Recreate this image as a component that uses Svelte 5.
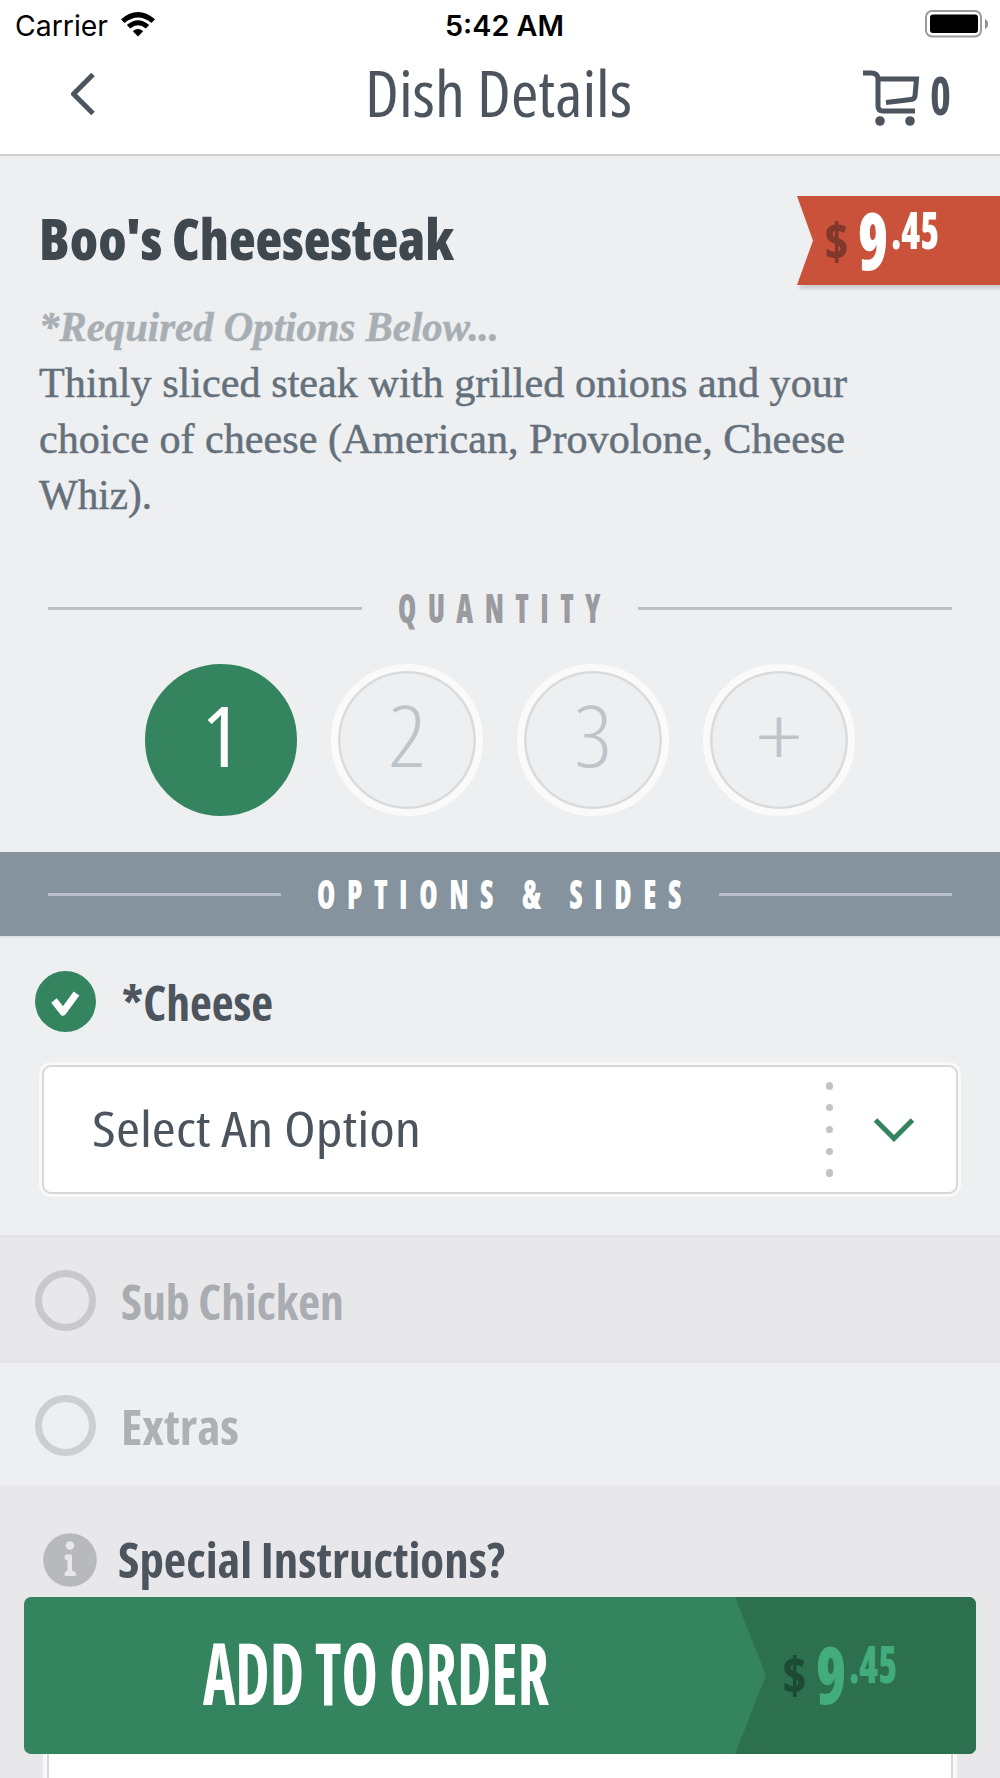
<script>
  const dish = {
    name: "Boo's Cheesesteak",
    dollars: '9',
    cents: '.45'
  };

  const quantities = [
    { text: '1', width: 38 },
    { text: '2', width: 38 },
    { text: '3', width: 38 },
    { text: '+', width: 46 }
  ];

  let quantity = $state('1');
  let cartCount = $state(0);
</script>

<!-- One line of text squeezed to an exact width. The box is as tall as the capitals. -->
{#snippet fit(text, width, size, kind = 'regular', cap = 0.714)}
  <svg class="fit {kind}" {width} height={Math.round(size * cap)}>
    <text x="0" y={Math.round(size * cap)} font-size={size} textLength={width} lengthAdjust="spacingAndGlyphs">{text}</text>
  </svg>
{/snippet}

{#snippet price()}
  <span class="currency">{@render fit('$', 25, 51, 'heavy')}</span>
  <svg class="fit heavy amount" width="81" height="57">
    <text y="57" font-size="80"><tspan textLength="30" lengthAdjust="spacingAndGlyphs">{dish.dollars}</tspan><tspan font-size="51" dx="3" dy="-21" textLength="48" lengthAdjust="spacingAndGlyphs">{dish.cents}</tspan></text>
  </svg>
{/snippet}

<div class="screen">
  <div class="status">
    <div class="carrier">
      {@render fit('Carrier', 93, 28, 'system', 0.727)}
      <svg class="wifi" width="34" height="25" viewBox="0 0 34 25">
        <path d="M0 7.3Q17-7.3 34 7.3L30.5 11Q17 0 3.500 11Z" />
        <path d="M5.800 13Q17 3.500 28.200 13L24.800 16.500Q17 10 9.200 16.500Z" />
        <path d="M11.800 19.200Q17 15 22.200 19.200L17 24.500Z" />
      </svg>
    </div>
    <div class="time">{@render fit('5:42 AM', 119, 28, 'system semi', 0.727)}</div>
    <svg class="battery" width="63" height="28" viewBox="0 0 63 28">
      <rect x="1" y="1" width="55" height="25.500" rx="6" fill="none" stroke="#9b9b9b" stroke-width="2" />
      <rect x="5" y="4.500" width="48" height="18.500" rx="3" />
      <path d="M60 9Q63 10.500 63 14T60 19Z" fill="#8e8e8e" />
    </svg>
  </div>

  <header class="nav">
    <button class="back" aria-label="Back">
      <svg width="24" height="42" viewBox="0 0 24 42">
        <path d="M22 1.500L2.500 21L22 40.500" />
      </svg>
    </button>
    <h1>{@render fit('Dish Details', 267, 63)}</h1>
    <div class="cart">
      <svg width="58" height="58" viewBox="0 0 58 58">
        <path class="line" d="M0 3H8Q15 3 15 9V36Q15 41 20 41H52" />
        <path class="line" d="M15 9H53.500L52 26Q51.500 29 48 29.600L23 32.500" />
        <circle cx="17" cy="51" r="4.800" />
        <circle cx="47" cy="51" r="4.800" />
      </svg>
      {@render fit(String(cartCount), 21, 54, 'bold')}
    </div>
  </header>

  <section class="dish">
    <h2>{@render fit(dish.name, 415, 56, 'heavy')}</h2>
    <div class="tag-shadow">
      <div class="tag">{@render price()}</div>
    </div>
    <div class="description">
      <span class="required">{@render fit('*Required Options Below...', 460, 42, 'serif strong', 0.66)}</span>
      {@render fit('Thinly sliced steak with grilled onions and your', 808, 42, 'serif', 0.66)}
      {@render fit('choice of cheese (American, Provolone, Cheese', 806, 42, 'serif', 0.66)}
      {@render fit('Whiz).', 113, 42, 'serif', 0.66)}
    </div>
  </section>

  <div class="divider quantity-title">
    <i></i>
    {@render fit('QUANTITY', 214, 41, 'heavy spaced')}
    <i></i>
  </div>

  <div class="quantities">
    {#each quantities as item}
      <button class="circle" class:selected={quantity === item.text} onclick={() => (quantity = item.text)}>
        {@render fit(item.text, item.width, 84, quantity === item.text ? 'regular' : 'light')}
      </button>
    {/each}
  </div>

  <div class="divider options-title">
    <i></i>
    {@render fit('OPTIONS & SIDES', 376, 41, 'heavy spaced')}
    <i></i>
  </div>

  <section class="cheese">
    <div class="option">
      <svg class="mark" width="61" height="61" viewBox="0 0 61 61">
        <circle cx="30.500" cy="30.500" r="30.500" fill="#34845f" />
        <path d="M19 29.500L28 41L41.500 22.500" fill="none" stroke="#fff" stroke-width="7" stroke-linejoin="round" />
      </svg>
      {@render fit('*Cheese', 151, 48, 'bold')}
    </div>
    <div class="select">
      {@render fit('Select An Option', 329, 49)}
      <div class="dots">
        {#each Array(5) as _}
          <b></b>
        {/each}
      </div>
      <svg class="chevron" width="40" height="24" viewBox="0 0 40 24">
        <path d="M1.500 2L20 20.500L38.500 2" />
      </svg>
    </div>
  </section>

  <div class="option off shaded">
    <span class="ring"></span>
    {@render fit('Sub Chicken', 223, 48, 'bold')}
  </div>
  <div class="option off">
    <span class="ring"></span>
    {@render fit('Extras', 118, 48, 'bold')}
  </div>

  <section class="special">
    <div class="special-title">
      <svg width="54" height="54" viewBox="0 0 54 54">
        <circle cx="27" cy="27" r="26.800" fill="#b8b9bc" />
        <circle cx="27" cy="12.500" r="4.200" fill="#e8e8ea" />
        <path d="M22 22.500Q22 21.500 23 21.500H28Q29 21.500 29 22.500V37Q29 38 31.500 38.500Q33 39 33 41.500Q33 43 31.500 43H23Q21.500 43 21.500 41.500Q21.500 39 23 38.500Q24.500 38 24.500 37V27.500Q22 27.500 21.500 25Z" fill="#e8e8ea" />
      </svg>
      {@render fit('Special Instructions?', 387, 48, 'bold')}
    </div>
    <div class="notes"></div>
  </section>

  <button class="add">
    <span class="add-label">{@render fit('ADD TO ORDER', 346, 86, 'bold')}</span>
    <span class="add-price">{@render price()}</span>
  </button>
</div>

<style>
  :global(body) {
    margin: 0;
    background: #eeeff1;
  }

  .screen {
    position: relative;
    width: 1000px;
    height: 1778px;
    overflow: hidden;
    display: flex;
    flex-direction: column;
    background: #eeeff1;
    color: #4c555e;
    font-family: 'Open Sans', 'Noto Sans', sans-serif;
  }

  .screen > * { flex-shrink: 0; }

  button {
    padding: 0;
    border: 0;
    background: none;
    color: inherit;
    font: inherit;
  }

  h1,
  h2 {
    margin: 0;
    font-weight: normal;
  }

  svg {
    display: block;
    flex: none;
  }

  /* Fitted text */
  .fit {
    overflow: visible;
    fill: currentColor;
    font-family: 'Open Sans', 'Noto Sans', sans-serif;
    font-stretch: 75%;
  }

  .light { font-weight: 350; }
  .regular { font-weight: 400; }
  .semi { font-weight: 600; }
  .bold { font-weight: 700; }
  .heavy { font-weight: 800; }

  .system {
    font-family: Inter, sans-serif;
    font-stretch: normal;
  }

  .serif {
    font-family: 'Liberation Serif', serif;
    font-stretch: normal;
    stroke: currentColor;
    stroke-width: 0.5px;
  }

  .strong {
    font-weight: bold;
    font-style: italic;
  }

  .spaced { letter-spacing: 16px; }

  /* Status bar and navigation */
  .status {
    box-sizing: border-box;
    height: 50px;
    padding: 16px 12px 0 15px;
    display: grid;
    grid-template-columns: 1fr auto 1fr;
    align-items: start;
    background: #fff;
    color: #000;
  }

  .carrier {
    display: flex;
  }

  .wifi { margin: -4px 0 0 13px; }
  .time { margin-left: 6px; }

  .battery {
    justify-self: end;
    margin-top: -6px;
  }

  .nav {
    box-sizing: border-box;
    height: 106px;
    padding: 22px 49px 0 71px;
    display: grid;
    grid-template-columns: 294px 272px 1fr;
    align-items: start;
    background: #fff;
    border-bottom: 2px solid #cdcfd0;
  }

  .back {
    justify-self: start;
    margin-top: 1px;
  }

  .back path,
  .line,
  .chevron path {
    fill: none;
    stroke: #4c555e;
    stroke-width: 5;
  }

  .cart {
    display: flex;
    justify-self: end;
    margin-top: -2px;
    fill: #4c555e;
  }

  .cart .fit { margin: 6px 0 0 9px; }

  /* Dish */
  .dish {
    box-sizing: border-box;
    height: 432px;
    padding: 40px 0 0 39px;
    display: grid;
    grid-template-columns: 1fr 203px;
    grid-template-rows: 90px auto;
  }

  h2 {
    padding-top: 24px;
    color: #40484f;
  }

  .tag-shadow {
    filter: drop-shadow(2px 4px 1px rgba(0, 0, 0, 0.12));
  }

  .tag {
    display: flex;
    align-items: flex-start;
    box-sizing: border-box;
    height: 89px;
    padding: 17px 0 0 27px;
    background: #ca523a;
    clip-path: polygon(0 0, 100% 0, 100% 100%, 0 100%, 16px 50%);
    color: #fff;
  }

  .tag .currency { color: #81372a; }
  .currency { padding-top: 11px; }
  .amount { margin-left: 9px; }

  .description {
    grid-column: 1 / 3;
    display: flex;
    flex-direction: column;
    gap: 28px;
    padding-top: 27px;
    color: #64717c;
  }

  .required { color: #a8afb4; }

  /* Rules on both sides of a caption */
  .divider {
    display: flex;
    align-items: center;
    padding: 0 48px;
    color: #999ba0;
  }

  .divider i {
    flex: 1;
    height: 3px;
    background: #bdbebf;
  }

  .divider .fit { margin: 0 26px 0 36px; }

  .quantity-title { height: 40px; }

  .quantities {
    display: flex;
    justify-content: center;
    gap: 34px;
    padding: 36px 0;
  }

  .circle {
    box-sizing: border-box;
    width: 152px;
    height: 152px;
    display: flex;
    justify-content: center;
    align-items: flex-start;
    padding-top: 36px;
    border: 7px solid #fafafa;
    border-radius: 50%;
    box-shadow: inset 0 0 0 2.5px #d9dadb;
    color: #bdc5cb;
  }

  .selected {
    border-color: #34845f;
    background: #34845f;
    box-shadow: none;
    color: #fff;
  }

  .options-title {
    height: 84px;
    background: #85939e;
    border-bottom: 2px solid #dfe1e3;
    color: #fff;
  }

  .options-title i { background: #b7bfc8; }

  /* Options */
  .cheese {
    height: 297px;
  }

  .option {
    display: flex;
    align-items: center;
    gap: 26px;
    padding-left: 35px;
  }

  .option .fit { margin-top: 4px; }

  .cheese .option { padding-top: 33px; }

  .select {
    box-sizing: border-box;
    width: 916px;
    height: 129px;
    margin: 33px 0 0 42px;
    padding: 0 42px 0 48px;
    display: flex;
    align-items: center;
    background: #fff;
    border: 2.5px solid #d7d8d9;
    border-radius: 9px;
    box-shadow: 0 0 0 3px #f9f9f9;
  }

  .dots {
    display: flex;
    flex-direction: column;
    gap: 14.6px;
    margin: 0 41px 0 auto;
  }

  .dots b {
    width: 7.2px;
    height: 7.2px;
    border-radius: 50%;
    background: #c3c3c3;
  }

  .chevron path { stroke: #34845f; }

  .off {
    box-sizing: border-box;
    height: 123px;
    gap: 25px;
    padding-top: 2px;
    color: #adb1b6;
  }

  .ring {
    box-sizing: border-box;
    width: 61px;
    height: 61px;
    border: 7.5px solid #cbcfd2;
    border-radius: 50%;
  }

  .shaded {
    height: 128px;
    padding-top: 3px;
    border: solid #e4e4e6;
    border-width: 3px 0;
    background: #e8e8ea;
    color: #a9adb2;
  }

  .shaded .ring { border-color: #c8c9cb; }

  .special {
    background: #e8e8ea;
  }

  .special-title {
    display: flex;
    align-items: center;
    gap: 21px;
    padding: 47px 0 0 43px;
  }

  .special-title .fit { margin-top: 1px; }

  .notes {
    height: 200px;
    margin: 34px 47px 0;
    background: #fff;
    border: 2.5px solid #d7d8d9;
    border-radius: 9px;
    box-shadow: 0 0 0 4px #f9f9f9;
  }

  /* Floating order button */
  .add {
    position: absolute;
    left: 24px;
    top: 1597px;
    width: 952px;
    height: 157px;
    display: flex;
    align-items: flex-start;
    overflow: hidden;
    border-radius: 7px;
    background: #34845f;
  }

  .add-label {
    flex: 1;
    padding: 47px 0 0 179px;
    color: #fff;
  }

  .add-price {
    box-sizing: border-box;
    width: 241px;
    height: 100%;
    display: flex;
    align-items: flex-start;
    padding: 50px 0 0 47px;
    background: #2c7050;
    clip-path: polygon(0 0, 100% 0, 100% 100%, 0 100%, 31px 50%);
    color: #43ac7c;
  }

  .add-price .currency { color: #1d4a34; }
</style>
